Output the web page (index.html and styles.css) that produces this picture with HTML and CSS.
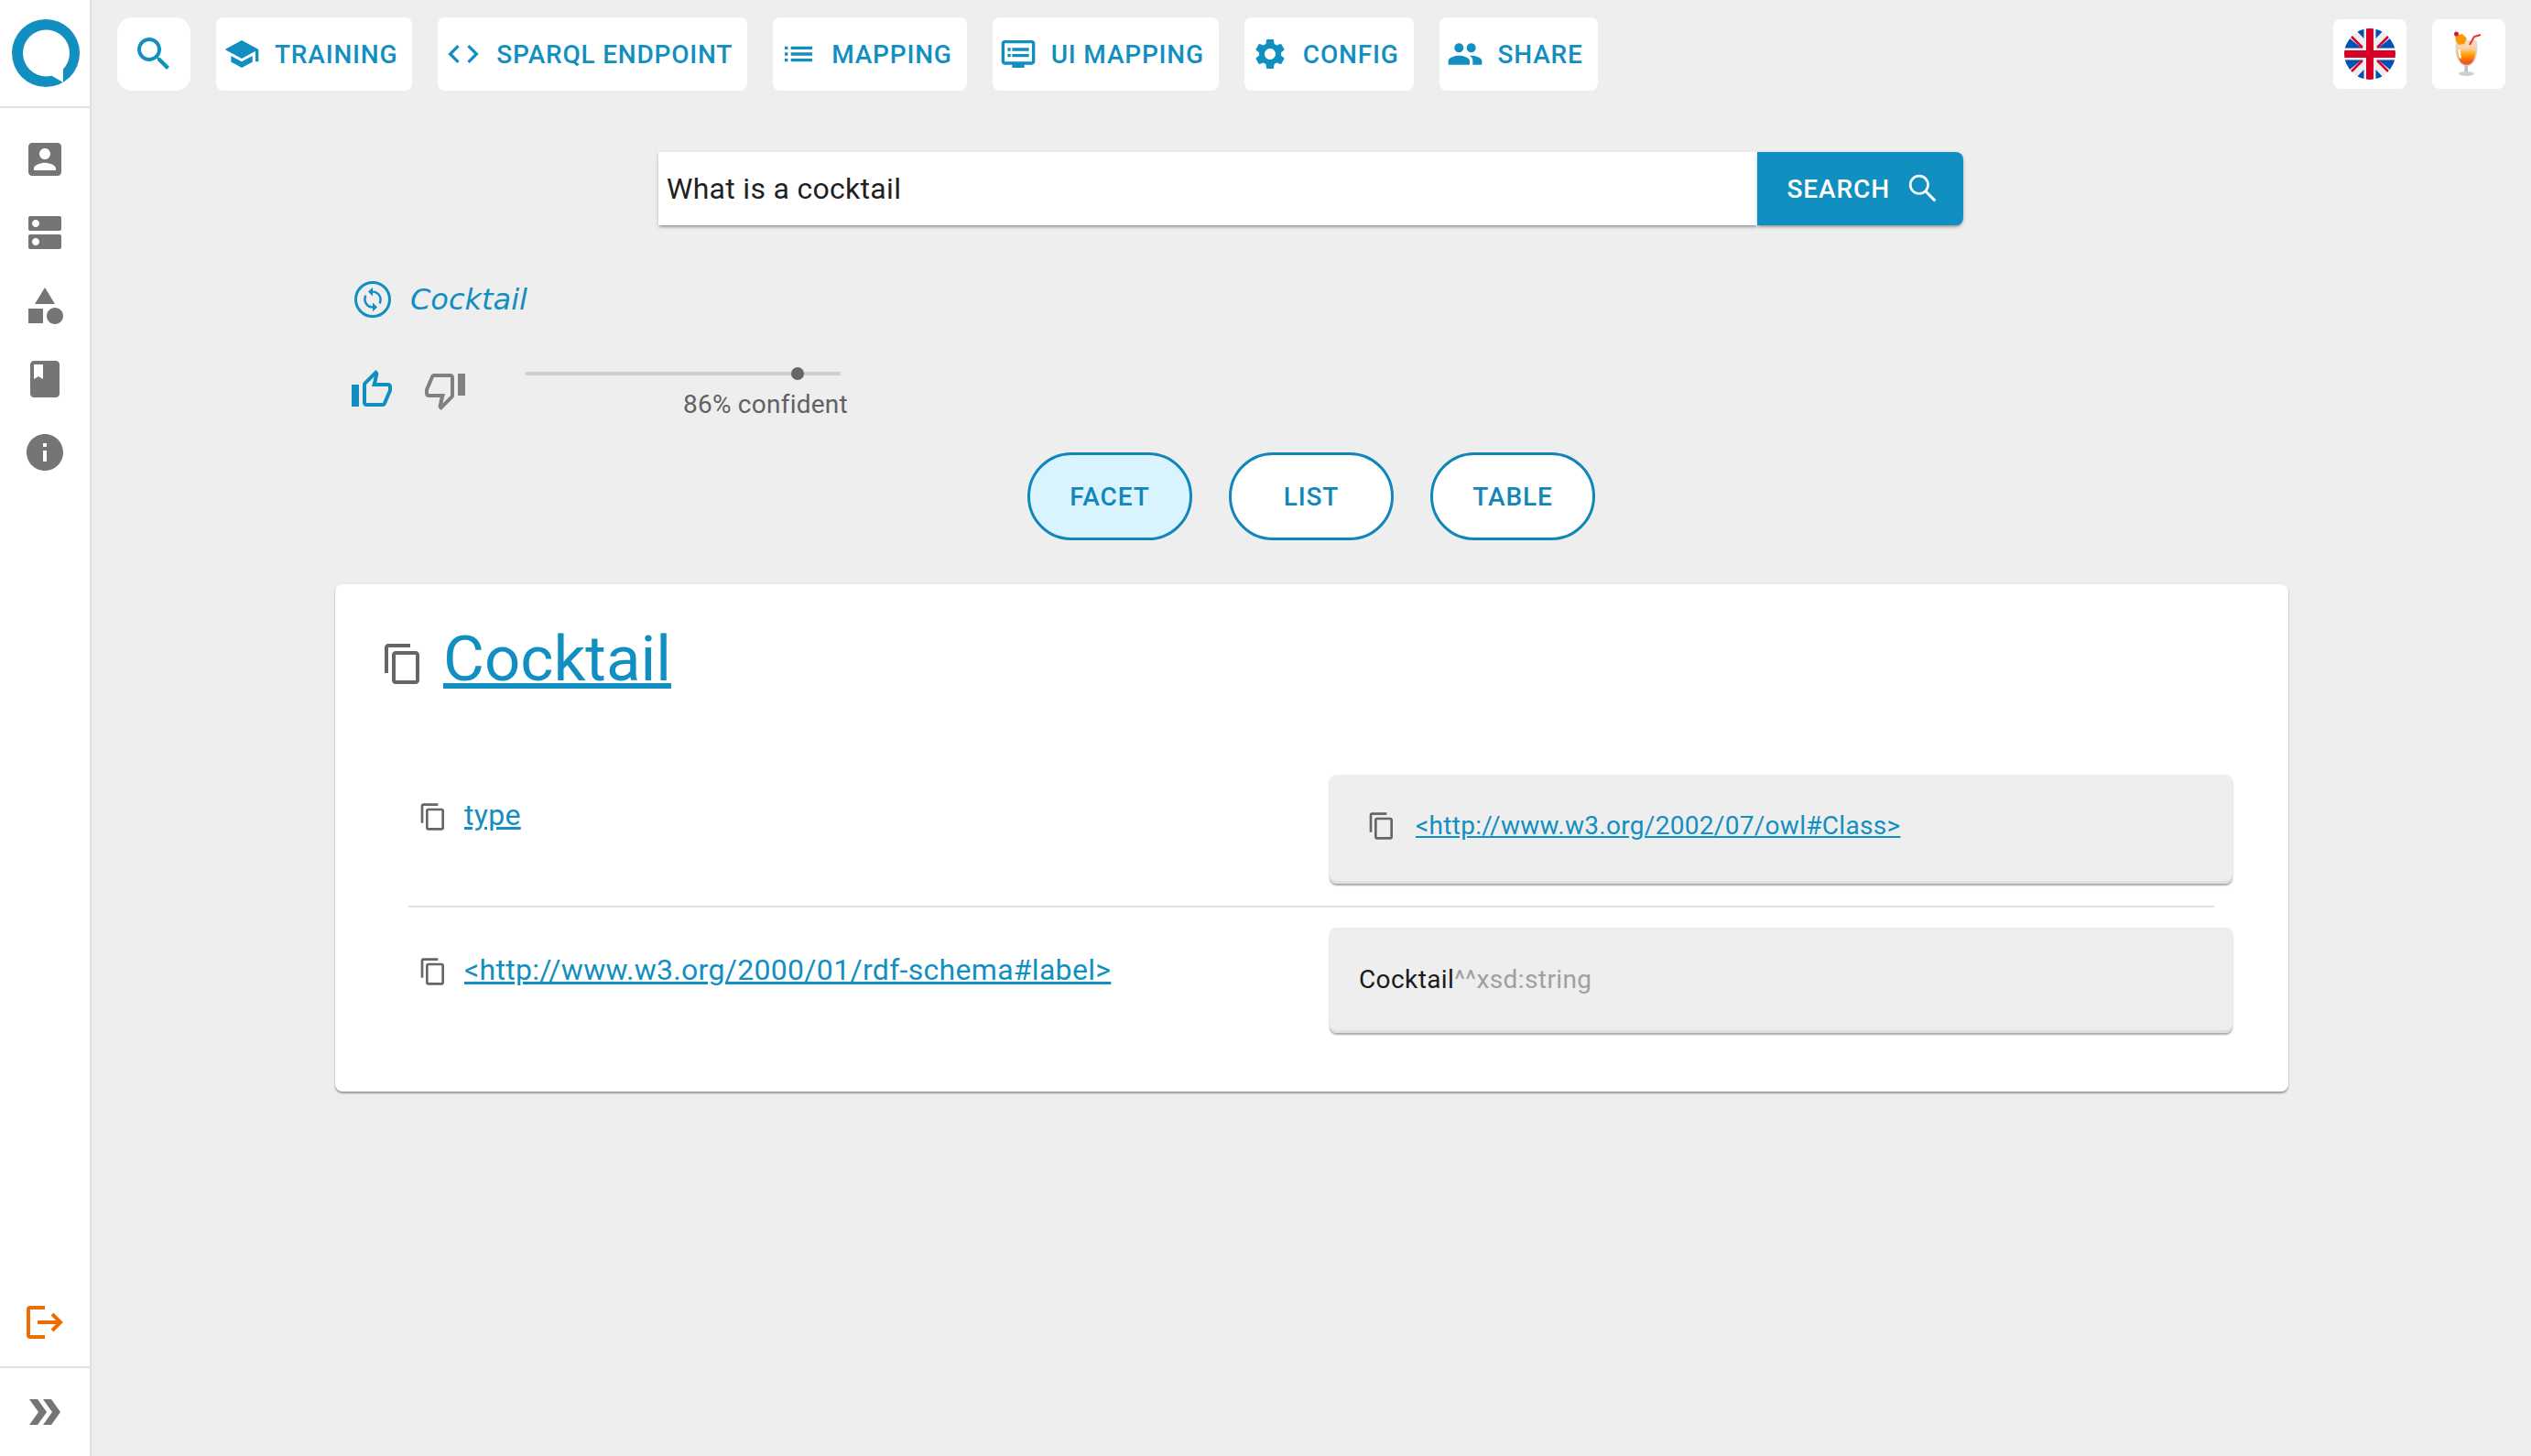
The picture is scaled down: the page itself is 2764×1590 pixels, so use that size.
FILE: index.html
```html
<!DOCTYPE html>
<html lang="en">
<head>
<meta charset="utf-8">
<title>QAnswer</title>
<link rel="stylesheet" href="styles.css">
</head>
<body>
<svg class="defs" width="0" height="0" aria-hidden="true">
  <defs>
    <path id="i-copy" d="M16 1H4c-1.1 0-2 .9-2 2v14h2V3h12V1zm3 4H8c-1.1 0-2 .9-2 2v14c0 1.1.9 2 2 2h11c1.1 0 2-.9 2-2V7c0-1.1-.9-2-2-2zm0 16H8V7h11v14z"/>
    <path id="i-thumb" d="M9 21h9c.83 0 1.54-.5 1.84-1.22l3.02-7.05c.09-.23.14-.47.14-.73v-2c0-1.1-.9-2-2-2h-6.31l.95-4.57.03-.32c0-.41-.17-.79-.44-1.06L14.17 1 7.58 7.59C7.22 7.95 7 8.45 7 9v10c0 1.1.9 2 2 2zM9 9l4.34-4.34L12 10h9v2l-3 7H9V9zM1 9h4v12H1z"/>
  </defs>
</svg>
<div class="app">
  <aside class="side">
    <div class="logo-box">
      <svg class="logo" viewBox="0 0 76 76"><circle cx="38" cy="38" r="37" fill="#128fc1"/><circle cx="38.500" cy="38" r="25.500" fill="#fff"/><path d="M44 62.500 57 70V54z" fill="#fff"/></svg>
    </div>
    <nav class="side-list">
      <div class="side-item"><svg class="ic48 grey" viewBox="0 0 24 24"><path d="M3 5v14c0 1.100.89 2 2 2h14c1.100 0 2-.9 2-2V5c0-1.100-.9-2-2-2H5c-1.110 0-2 .9-2 2zm12 4c0 1.660-1.340 3-3 3s-3-1.340-3-3 1.340-3 3-3 3 1.340 3 3zm-9 8c0-2 4-3.100 6-3.100s6 1.100 6 3.100v1H6v-1z"/></svg></div>
      <div class="side-item"><svg class="ic48 grey" viewBox="0 0 24 24"><path d="M20 13H4c-.55 0-1 .45-1 1v6c0 .55.45 1 1 1h16c.55 0 1-.45 1-1v-6c0-.55-.45-1-1-1zM7 19c-1.100 0-2-.9-2-2s.9-2 2-2 2 .9 2 2-.9 2-2 2zM20 3H4c-.55 0-1 .45-1 1v6c0 .55.45 1 1 1h16c.55 0 1-.45 1-1V4c0-.55-.45-1-1-1zM7 9c-1.100 0-2-.9-2-2s.9-2 2-2 2 .9 2 2-.9 2-2 2z"/></svg></div>
      <div class="side-item"><svg class="ic48 grey" viewBox="0 0 24 24"><path d="M12 2l-5.500 9h11L12 2zm5.500 11c-2.490 0-4.500 2.010-4.500 4.500s2.010 4.500 4.500 4.500 4.500-2.010 4.500-4.500-2.010-4.500-4.500-4.500zM3 21.500h8v-8H3v8z"/></svg></div>
      <div class="side-item"><svg class="ic48 grey" viewBox="0 0 24 24"><path d="M18 2H6c-1.100 0-2 .9-2 2v16c0 1.100.9 2 2 2h12c1.100 0 2-.9 2-2V4c0-1.100-.9-2-2-2zM6 4h5v8l-2.500-1.500L6 12V4z"/></svg></div>
      <div class="side-item"><svg class="ic48 grey" viewBox="0 0 24 24"><path d="M12 2C6.480 2 2 6.480 2 12s4.480 10 10 10 10-4.480 10-10S17.520 2 12 2zm1 15h-2v-6h2v6zm0-8h-2V7h2v2z"/></svg></div>
    </nav>
    <div class="side-foot">
      <div class="side-logout">
        <svg class="logout" viewBox="0 0 40 36"><path d="M20 2H4a2 2 0 0 0-2 2v28a2 2 0 0 0 2 2h16M12 18h26M28 9l9 9-9 9" fill="none" stroke="#ef6c00" stroke-width="4"/></svg>
      </div>
      <div class="side-expand">
        <svg class="chev" viewBox="0 0 34 28"><path d="M0 0h9l10 14-10 14H0l10-14zM15 0h9l10 14-10 14h-9l10-14z"/></svg>
      </div>
    </div>
  </aside>

  <main class="main">
    <header class="topbar">
      <div class="tabs">
        <a class="tab tab-icon"><svg class="ic48 blue" viewBox="0 0 24 24"><path d="M15.500 14h-.79l-.28-.27C15.410 12.590 16 11.110 16 9.500 16 5.910 13.090 3 9.500 3S3 5.910 3 9.500 5.910 16 9.500 16c1.610 0 3.090-.59 4.230-1.570l.27.28v.79l5 4.990L20.490 19l-4.990-5zm-6 0C7.010 14 5 11.990 5 9.500S7.010 5 9.500 5 14 7.010 14 9.500 11.990 14 9.500 14z"/></svg></a>
        <a class="tab"><svg class="ic40 blue" viewBox="0 0 24 24"><path d="M5 13.180v4L12 21l7-3.820v-4L12 17l-7-3.820zM12 3 1 9l11 6 9-4.910V17h2V9L12 3z"/></svg>Training</a>
        <a class="tab"><svg class="ic40 blue" viewBox="0 0 24 24"><path d="M9.400 16.600 4.800 12l4.600-4.600L8 6l-6 6 6 6 1.400-1.400zm5.200 0 4.600-4.600-4.600-4.600L16 6l6 6-6 6-1.400-1.400z"/></svg>SPARQL Endpoint</a>
        <a class="tab"><svg class="ic40 blue" viewBox="0 0 24 24"><path d="M3 13h2v-2H3v2zm0 4h2v-2H3v2zm0-8h2V7H3v2zm4 4h14v-2H7v2zm0 4h14v-2H7v2zM7 7v2h14V7H7z"/></svg>Mapping</a>
        <a class="tab"><svg class="ic40 blue" viewBox="0 0 24 24"><path d="M21 3H3c-1.100 0-2 .9-2 2v12c0 1.100.89 2 2 2h5v2h8v-2h5c1.100 0 1.990-.9 1.990-2L23 5c0-1.100-.9-2-2-2zm0 14H3V5h18v12zm-2-9H8v2h11V8zm0 4H8v2h11v-2zM7 8H5v2h2V8zm0 4H5v2h2v-2z"/></svg>UI Mapping</a>
        <a class="tab"><svg class="ic40 blue" viewBox="0 0 24 24"><path d="M19.140 12.940c.04-.3.06-.61.06-.94 0-.32-.02-.64-.07-.94l2.030-1.580c.18-.14.23-.41.12-.61l-1.920-3.320c-.12-.22-.37-.29-.59-.22l-2.390.96c-.5-.38-1.030-.7-1.620-.94l-.36-2.540c-.04-.24-.24-.41-.48-.41h-3.840c-.24 0-.43.17-.47.41l-.36 2.540c-.59.24-1.130.57-1.620.94l-2.390-.96c-.22-.08-.47 0-.59.22L2.740 8.870c-.12.21-.08.47.12.61l2.030 1.580c-.05.3-.09.63-.09.94s.02.64.07.94l-2.030 1.580c-.18.14-.23.41-.12.61l1.920 3.320c.12.22.37.29.59.22l2.390-.96c.5.38 1.030.7 1.620.94l.36 2.540c.05.24.24.41.48.41h3.840c.24 0 .44-.17.47-.41l.36-2.540c.59-.24 1.130-.56 1.620-.94l2.390.96c.22.08.47 0 .59-.22l1.920-3.320c.12-.22.07-.47-.12-.61l-2.010-1.580zM12 15.600c-1.980 0-3.600-1.620-3.600-3.600s1.620-3.600 3.600-3.600 3.600 1.620 3.600 3.600-1.620 3.600-3.600 3.600z"/></svg>Config</a>
        <a class="tab"><svg class="ic40 blue" viewBox="0 0 24 24"><path d="M16 11c1.660 0 2.990-1.340 2.990-3S17.660 5 16 5c-1.660 0-3 1.340-3 3s1.340 3 3 3zm-8 0c1.660 0 2.990-1.340 2.990-3S9.660 5 8 5C6.340 5 5 6.340 5 8s1.340 3 3 3zm0 2c-2.330 0-7 1.170-7 3.500V19h14v-2.500c0-2.330-4.670-3.500-7-3.500zm8 0c-.29 0-.62.02-.97.05 1.160.84 1.970 1.970 1.970 3.450V19h6v-2.500c0-2.330-4.670-3.500-7-3.500z"/></svg>Share</a>
      </div>
      <div class="corner">
        <div class="corner-btn">
          <svg class="flag" viewBox="0 0 56 56">
            <defs><clipPath id="fc"><circle cx="28" cy="28" r="28"/></clipPath></defs>
            <g clip-path="url(#fc)">
              <rect width="56" height="56" fill="#eeeeee"/>
              <path d="M11 0h10.500v11zM0 21.500h19L6 11zM45 0H34.500v11zM56 21.500H37l13-10.500zM11 56h10.500V45zM0 34.500h19L6 45zM45 56H34.500V45zM56 34.500H37l13 10.500z" fill="#0052b4"/>
              <path d="M8 9l12 12M48 9 36 21M8 47l12-12M48 47 36 35" stroke="#d80027" stroke-width="2.500"/>
              <path d="M24 0h8v24h24v8H32v24h-8V32H0v-8h24z" fill="#d80027"/>
            </g>
          </svg>
        </div>
        <div class="corner-btn">
          <svg class="drink" viewBox="0 0 32 50">
            <defs><linearGradient id="dg" x1="0" y1="0" x2="0" y2="1"><stop offset="0" stop-color="#f8dcc4"/><stop offset=".3" stop-color="#fcd0a0"/><stop offset=".55" stop-color="#ffa000"/><stop offset=".85" stop-color="#f4511e"/><stop offset="1" stop-color="#f0714f"/></linearGradient></defs>
            <path d="M3 11C1 22 3 36 13 38c10 0 13-14 11-27z" fill="url(#dg)" stroke="#d8d8d8" stroke-width="1.500"/>
            <path d="M4.500 20c0 5 0 8 2 10l1.500-1c-1-3-1-6-1-9z" fill="#fff"/>
            <rect x="11.500" y="38" width="3.500" height="7" fill="#bdbdbd"/>
            <ellipse cx="13.500" cy="46.500" rx="8.500" ry="2.500" fill="#cfcfcf"/>
            <path d="M17 15l5-9 7-2" fill="none" stroke="#ef2b2d" stroke-width="2"/>
            <path d="M1 5l8-2 5 5-3 6-6 1-3-4z" fill="#fb9a00"/>
            <circle cx="2.500" cy="3" r="2.500" fill="#d81b3c"/>
          </svg>
        </div>
      </div>
    </header>

    <div class="content">
      <form class="searchbar">
        <div class="search-input">What is a cocktail</div>
        <button class="search-btn" type="button">Search<svg class="ic40" viewBox="0 0 24 24"><circle cx="9.500" cy="9.500" r="5.800" fill="none" stroke="#fff" stroke-width="1.600"/><path d="M13.800 13.800 20 20" stroke="#fff" stroke-width="1.800"/></svg></button>
      </form>

      <div class="answer">
        <div class="interp">
          <svg class="ic48 blue" viewBox="0 0 24 24"><circle cx="12" cy="12" r="9.250" fill="none" stroke="#128fc1" stroke-width="1.500"/><path d="M12 7.200V5.400L9.500 7.800l2.500 2.500V8.400a3.700 3.700 0 0 1 3.300 5.300l.9.900A4.900 4.900 0 0 0 12 7.200zM12 15.600a3.700 3.700 0 0 1-3.300-5.300l-.9-.9A4.900 4.900 0 0 0 12 16.800v1.800l2.500-2.400-2.500-2.500z"/></svg>
          <span class="interp-text">Cocktail</span>
        </div>
        <div class="feedback">
          <svg class="ic48 blue" viewBox="0 0 24 24"><use href="#i-thumb"/></svg>
          <svg class="ic48 greyer flip" viewBox="0 0 24 24"><use href="#i-thumb"/></svg>
          <div class="confidence">
            <div class="track"><span class="knob"></span></div>
            <div class="conf-label">86% confident</div>
          </div>
        </div>
      </div>

      <div class="views">
        <button class="pill pill-on" type="button">Facet</button>
        <button class="pill" type="button">List</button>
        <button class="pill" type="button">Table</button>
      </div>

      <section class="card">
        <h1 class="card-title">
          <svg class="ic48 copy" viewBox="0 0 24 24"><use href="#i-copy"/></svg>
          <a class="title-link">Cocktail</a>
        </h1>
        <div class="row row-first">
          <div class="prop">
            <svg class="ic32 copy" viewBox="0 0 24 24"><use href="#i-copy"/></svg>
            <a class="prop-link">type</a>
          </div>
          <div class="value value-a">
            <svg class="ic32 copy" viewBox="0 0 24 24"><use href="#i-copy"/></svg>
            <a class="value-link">&lt;http://www.w3.org/2002/07/owl#Class&gt;</a>
          </div>
        </div>
        <hr class="divider">
        <div class="row">
          <div class="prop">
            <svg class="ic32 copy" viewBox="0 0 24 24"><use href="#i-copy"/></svg>
            <a class="prop-link">&lt;http://www.w3.org/2000/01/rdf-schema#label&gt;</a>
          </div>
          <div class="value value-b">
            <span class="lit">Cocktail</span><span class="lit-type">^^xsd:string</span>
          </div>
        </div>
      </section>
    </div>
  </main>
</div>
</body>
</html>
```

FILE: styles.css
```css
* { box-sizing: border-box; }
html, body { margin: 0; height: 100%; }
body { background: #eeeeee; font-family: Roboto, "Liberation Sans", sans-serif; color: #212121; overflow: hidden; }
.defs { position: absolute; }
.app { display: flex; height: 1590px; }

.blue { fill: #128fc1; }
.grey { fill: #757575; }
.greyer { fill: #808080; }
.copy { fill: #666; }
.ic48 { width: 48px; height: 48px; flex: none; display: block; }
.ic40 { width: 40px; height: 40px; flex: none; display: block; }
.ic32 { width: 32px; height: 32px; flex: none; display: block; }
.flip { transform: rotate(180deg); }

.side { width: 100px; flex: none; background: #fff; border-right: 2px solid #e0e0e0; display: flex; flex-direction: column; height: 100%; }
.logo-box { height: 118px; border-bottom: 2px solid #e0e0e0; padding: 20px 0 0 12px; flex: none; }
.logo { width: 76px; height: 76px; display: block; }
.side-list { padding-top: 16px; display: flex; flex-direction: column; }
.side-item { height: 80px; display: flex; align-items: center; justify-content: center; }
.side-foot { margin-top: auto; }
.side-logout { height: 102px; border-bottom: 2px solid #e0e0e0; display: flex; align-items: center; justify-content: center; padding-top: 4px; }
.logout { width: 40px; height: 36px; display: block; }
.side-expand { height: 96px; display: flex; align-items: center; justify-content: center; }
.chev { width: 34px; height: 28px; fill: #757575; display: block; }

.main { flex: 1; min-width: 0; }
.topbar { display: flex; justify-content: space-between; padding: 19px 28px 0; height: 99px; }
.tabs { display: flex; gap: 28px; }
.tab { height: 80px; background: #fff; border-radius: 8px; display: flex; align-items: center; gap: 16px; padding: 0 16px 0 8px; color: #128fc1; font-size: 28px; font-weight: 500; letter-spacing: .8px; text-transform: uppercase; white-space: nowrap; }
.tab-icon { width: 80px; justify-content: center; padding: 0; border-radius: 16px; }
.corner { display: flex; gap: 28px; padding-top: 2px; }
.corner-btn { width: 80px; height: 76px; background: #fff; border-radius: 8px; display: flex; align-items: center; justify-content: center; }
.flag { width: 56px; height: 56px; display: block; }
.drink { width: 32px; height: 50px; display: block; }

.searchbar { display: flex; margin: 67px 0 0 619px; width: 1425px; height: 80px; }
.search-input { width: 1201px; background: #fff; font-size: 32px; letter-spacing: .3px; padding-left: 9px; line-height: 80px; color: #212121; box-shadow: 0 3px 3px -2px rgba(0,0,0,.3), 0 2px 4px rgba(0,0,0,.2); }
.search-btn { flex: 1; background: #128fc1; color: #fff; border: 0; border-radius: 0 8px 8px 0; font: 500 28px Roboto, sans-serif; letter-spacing: .9px; text-transform: uppercase; display: flex; align-items: center; gap: 16px; padding: 0 24px 0 32px; box-shadow: 0 3px 3px -2px rgba(0,0,0,.3), 0 2px 4px rgba(0,0,0,.2); }

.answer { margin-left: 280px; padding-top: 57px; }
.interp { display: flex; align-items: center; gap: 17px; height: 48px; padding-left: 3px; }
.interp-text { font: italic 32px "DejaVu Sans", sans-serif; color: #128fc1; }
.feedback { display: flex; gap: 32px; margin-top: 51px; height: 92px; }
.feedback .ic48:first-child { margin-left: 2px; }
.confidence { width: 352px; margin-left: 32px; }
.track { position: relative; width: 344px; height: 4px; background: #cfcfcf; margin-top: 4px; }
.knob { position: absolute; left: 290px; top: -5px; width: 14px; height: 14px; border-radius: 50%; background: #666; }
.conf-label { text-align: right; font-size: 28px; letter-spacing: .25px; color: #616161; margin-top: 15px; line-height: 34px; }

.views { display: flex; gap: 40px; margin: 0 0 0 1022px; }
.pill { width: 180px; height: 96px; border: 3px solid #1087b8; border-radius: 48px; background: #fff; color: #1087b8; font: 500 28px Roboto, sans-serif; letter-spacing: .9px; text-transform: uppercase; }
.pill-on { background: #d9f3ff; }

.card { background: #fff; margin: 48px 0 0 266px; width: 2133px; height: 554px; border-radius: 8px; box-shadow: 0 2px 2px rgba(0,0,0,.35), 0 0 2px rgba(0,0,0,.08); padding: 0 0 0 50px; }
.card-title { margin: 0; display: flex; align-items: flex-start; height: 208px; font-weight: 400; padding-top: 40px; }
.card-title .ic48 { margin-top: 23px; }
.title-link { font-size: 69px; line-height: 84px; color: #128fc1; text-decoration: underline; text-decoration-thickness: 6px; margin-left: 20px; }
.row { display: flex; width: 2064px; }
.prop { width: 1036px; display: flex; align-items: flex-start; padding-left: 41px; padding-top: 27px; }
.row-first .prop { padding-top: 25px; }
.prop .ic32 { margin-top: 5px; }
.prop-link, .value-link { color: #128fc1; text-decoration: underline; }
.prop-link { font-size: 32px; letter-spacing: .3px; line-height: 38px; margin-left: 18px; }
.value { width: 986px; background: #eeeeee; border-radius: 8px; box-shadow: 0 2px 2px rgba(0,0,0,.35), inset 0 -3px 0 #e0e0e0; display: flex; align-items: center; font-size: 28px; }
.value-a { height: 119px; padding: 0 0 7px 41px; gap: 21px; }
.value-b { height: 115px; padding: 0 0 2px 32px; letter-spacing: .4px; }
.row-first { height: 143px; }
.divider { border: 0; height: 2px; background: #e0e0e0; width: 1972px; margin: 0 0 22px 30px; }
.value-link { line-height: 34px; letter-spacing: .3px; }
.lit { color: #1a1a1a; }
.lit-type { color: #a0a0a0; }
```
